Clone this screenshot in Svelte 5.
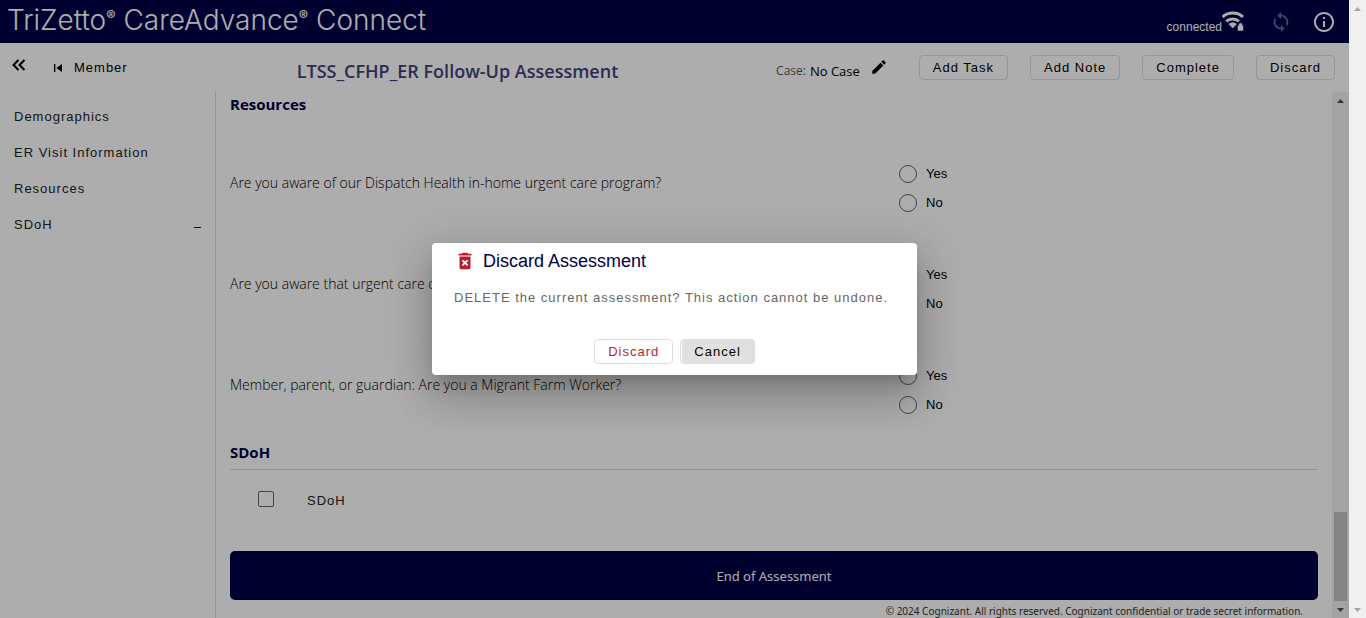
<script>
  const sections = ['Demographics', 'ER Visit Information', 'Resources', 'SDoH'];
  const actions = ['Add Task', 'Add Note', 'Complete', 'Discard'];
  const questions = [
    'Are you aware of our Dispatch Health in-home urgent care program?',
    'Are you aware that urgent care centers are available?',
    'Member, parent, or guardian: Are you a Migrant Farm Worker?'
  ];
</script>

{#snippet scrollbar(kind)}
  <div class="scrollbar {kind}" aria-hidden="true">
    <svg width="17" height="17" viewBox="0 0 17 17"><path d="M5 11h7L8.500 7z" /></svg>
    <span class="thumb"></span>
    <svg width="17" height="17" viewBox="0 0 17 17"><path d="M5 7h7l-3.500 4z" /></svg>
  </div>
{/snippet}

<div class="window">
  <div class="app">
    <header class="brand">
      <div class="logo">TriZetto<sup>®</sup> CareAdvance<sup>®</sup> Connect</div>
      <div class="status">
        <span class="connected">connected</span>
        <svg class="wifi" width="24" height="22" viewBox="0 0 24 22">
          <g fill="none" stroke="#fff" stroke-width="3">
            <path d="M.5 6C6 .8 15.500 .8 21 6" />
            <path d="M4.300 10.300c3.700-3.200 9-3.200 12.700 0" />
          </g>
          <path d="M6.500 13q4.200-3.500 8.400 0L10.700 17.200z" fill="#fff" />
          <path d="M15.500 14.500h1v-.8a2 2 0 0 1 4 0v.8h1V20h-6z" fill="#fff" stroke="#000048" stroke-width=".5" />
        </svg>
        <svg class="sync" width="22" height="22" viewBox="0 0 24 24"><path d="M12 4V1L8 5l4 4V6c3.310 0 6 2.690 6 6 0 1.010-.25 1.970-.7 2.800l1.460 1.460C19.540 15.030 20 13.570 20 12c0-4.420-3.580-8-8-8zm0 14c-3.310 0-6-2.690-6-6 0-1.010.25-1.970.7-2.800L5.240 7.740C4.460 8.970 4 10.430 4 12c0 4.420 3.580 8 8 8v3l4-4-4-4v3z" /></svg>
        <svg width="24" height="24" viewBox="0 0 24 24" fill="#fff"><path d="M11 7h2v2h-2zm0 4h2v6h-2zm1-9C6.480 2 2 6.480 2 12s4.480 10 10 10 10-4.480 10-10S17.520 2 12 2zm0 18c-4.410 0-8-3.590-8-8s3.590-8 8-8 8 3.590 8 8-3.590 8-8 8z" /></svg>
      </div>
    </header>

    <div class="toolbar">
      <button class="plain collapse" aria-label="Collapse menu">
        <svg width="14" height="14" viewBox="0 0 14 14" fill="none" stroke="#000" stroke-width="2"><path d="M6.500 2l-5 5 5 5M12.500 2l-5 5 5 5" /></svg>
      </button>
      <button class="plain member">
        <svg width="16" height="16" viewBox="0 0 24 24"><path d="M6 6h2v12H6zM9.500 12l8.500 6V6z" /></svg>
        Member
      </button>
      <h1>LTSS_CFHP_ER Follow-Up Assessment</h1>
      <div class="case">
        <span class="case-label">Case:</span>
        <span>No Case</span>
        <button class="plain edit" aria-label="Edit case">
          <svg width="18" height="18" viewBox="0 0 24 24"><path d="M3 17.250V21h3.750L17.810 9.940l-3.750-3.750L3 17.250zM20.710 7.040a1 1 0 0 0 0-1.410l-2.340-2.340a1 1 0 0 0-1.410 0l-1.830 1.830 3.750 3.750 1.830-1.830z" /></svg>
        </button>
      </div>
      <div class="actions">
        {#each actions as action}<button class="btn">{action}</button>{/each}
      </div>
    </div>

    <div class="body">
      <nav>
        {#each sections as section}
          <a href="#{section}">{section}{#if section === 'SDoH'}<i></i>{/if}</a>
        {/each}
      </nav>
      <main>
        <h2>Resources</h2>
        <div class="questions">
          {#each questions as question, i}
            <div class="question" role="radiogroup" aria-labelledby="q{i}">
              <p id="q{i}">{question}</p>
              <div class="choices">
                <label><input type="radio" name="answer{i}" />Yes</label>
                <label><input type="radio" name="answer{i}" />No</label>
              </div>
            </div>
          {/each}
        </div>
        <h2 class="ruled">SDoH</h2>
        <label class="check"><input type="checkbox" /><span>SDoH</span></label>
        <button class="end">End of Assessment</button>
        <footer>© 2024 Cognizant. All rights reserved. Cognizant confidential or trade secret information.</footer>
      </main>
      {@render scrollbar('inner')}
    </div>

    <div class="scrim">
      <div class="dialog" role="dialog" aria-modal="true" aria-labelledby="dialog-title">
        <h3 id="dialog-title">
          <svg width="22" height="22" viewBox="0 0 24 24" fill="#b81f2d"><path d="M5 4h3.500l1-1h5l1 1H19v2H5z" /><path fill-rule="evenodd" d="M6 7h12v12c0 1.100-.9 2-2 2H8c-1.100 0-2-.9-2-2zm2.500 4.900L10.600 14l-2.100 2.100 1.400 1.400L12 15.400l2.100 2.100 1.400-1.400-2.100-2.100 2.100-2.100-1.400-1.400-2.100 2.100-2.100-2.100z" /></svg>
          Discard Assessment
        </h3>
        <p>DELETE the current assessment? This action cannot be undone.</p>
        <div class="dialog-actions">
          <button class="btn danger">Discard</button>
          <button class="btn cancel">Cancel</button>
        </div>
      </div>
    </div>
  </div>
  {@render scrollbar('outer')}
</div>

<style>
  :global(body) { margin: 0; }
  .window {
    display: flex;
    height: 100vh;
    overflow: hidden;
    font: 13px/20px "Liberation Sans", Arial, sans-serif;
    color: #000;
  }
  .window * { box-sizing: border-box; }
  .app { position: relative; flex: 1; min-width: 0; display: flex; flex-direction: column; background: #fff; }
  svg { display: block; flex: none; }
  button { font: inherit; color: inherit; cursor: pointer; }
  h1, h2, h3, p { margin: 0; }

  .brand {
    display: flex;
    align-items: center;
    justify-content: space-between;
    height: 43px;
    padding: 0 13px 0 7px;
    background: #000048;
    color: #fff;
  }
  .logo { font: 300 28px/40px Inter, sans-serif; white-space: nowrap; padding-bottom: 4px; }
  .logo sup { font-size: 14px; font-weight: 600; line-height: 0; vertical-align: 9px; }
  .status { display: flex; align-items: center; }
  .connected { font-size: 12px; padding-top: 10px; }
  .wifi { margin-right: 24px; }
  .sync { margin-right: 20px; fill: #66669a; }

  .toolbar { display: flex; align-items: center; height: 49px; padding: 0 14px 0 12px; }
  .plain { padding: 0; border: 0; background: none; }
  .collapse { margin-bottom: 5px; }
  .member { display: flex; align-items: center; gap: 8px; margin-left: 24px; letter-spacing: 1px; }
  h1 {
    margin: 6px 0 0 169px;
    font: 600 18px/24px "Open Sans", sans-serif;
    color: #414179;
    white-space: nowrap;
  }
  .case {
    display: flex;
    align-items: center;
    gap: 4px;
    margin: 6px 0 0 auto;
    font-family: "Open Sans", sans-serif;
    white-space: nowrap;
  }
  .case-label { font-size: 12px; color: #555; }
  .edit { margin: 0 0 8px 6px; }
  .actions { display: flex; gap: 22px; margin-left: 31px; }
  .btn {
    height: 25px;
    padding: 0 13px;
    border: 1px solid #ddd;
    border-radius: 4px;
    background: #fff;
    letter-spacing: 1px;
    line-height: 23px;
    white-space: nowrap;
  }

  .body { flex: 1; min-height: 0; display: flex; }
  nav { width: 216px; flex: none; padding: 7px 14px 0; border-right: 1px solid #dadada; }
  nav a {
    display: flex;
    justify-content: space-between;
    align-items: center;
    height: 36px;
    color: #222;
    text-decoration: none;
    letter-spacing: 1px;
  }
  nav i { width: 7px; height: 1px; background: #000; margin-top: 4px; }

  main { flex: 1; min-width: 0; padding: 0 14px; display: flex; flex-direction: column; overflow: hidden; }
  main > * { flex: none; }
  h2 { font: 700 15px/24px "Open Sans", sans-serif; color: #000048; }
  .questions { margin-top: 16px; }
  .question { display: grid; grid-template-columns: 615fr 385fr; align-items: center; height: 101px; }
  .question p { font-family: "Open Sans", sans-serif; font-size: 14px; font-weight: 300; color: #000; }
  .choices { padding-top: 12px; }
  .choices label { display: flex; align-items: center; gap: 9px; height: 29px; }
  input { appearance: none; margin: 0; border: 1px solid #666; background: #fff; }
  input[type="radio"] { width: 18px; height: 18px; border-radius: 50%; }
  .ruled { line-height: 34px; border-bottom: 1px solid #d4d4d4; }
  .check { display: flex; align-items: center; gap: 33px; height: 58px; padding-left: 28px; color: #222; letter-spacing: 1px; }
  .check span { padding-top: 4px; }
  input[type="checkbox"] { width: 16px; height: 16px; border-radius: 2px; }
  .end {
    height: 49px;
    margin-top: 23px;
    border: 0;
    border-radius: 5px;
    background: #000048;
    color: #fff;
    font-family: "Noto Sans", sans-serif;
  }
  footer {
    padding-right: 15px;
    font: 10px/22px "Noto Sans", sans-serif;
    color: #333;
    text-align: right;
  }

  .scrollbar { width: 17px; flex: none; display: flex; flex-direction: column; justify-content: space-between; background: #f0f0f0; }
  .outer { fill: #a3a3a3; }
  .inner { fill: #505050; }
  .inner .thumb { width: 13px; height: 89px; margin: auto auto 0; background: #c1c1c1; }

  .scrim {
    position: absolute;
    inset: 0;
    display: flex;
    align-items: center;
    justify-content: center;
    background: rgba(0, 0, 0, .32);
  }
  .dialog {
    width: 485px;
    max-width: 90%;
    padding: 6px 22px 11px;
    border-radius: 4px;
    background: #fff;
    box-shadow: 0 11px 15px -7px rgba(0, 0, 0, .2), 0 24px 38px 3px rgba(0, 0, 0, .14), 0 9px 46px 8px rgba(0, 0, 0, .12);
  }
  h3 { display: flex; align-items: center; gap: 7px; font-size: 18px; font-weight: 400; line-height: 24px; color: #000048; }
  .dialog p { margin-top: 15px; color: #666; letter-spacing: 1px; }
  .dialog-actions { display: flex; justify-content: center; gap: 7px; margin-top: 31px; }
  .danger { color: #b81f2d; }
  .cancel { background: #e0e0e0; box-shadow: inset 1px 0 #fff; }
</style>
